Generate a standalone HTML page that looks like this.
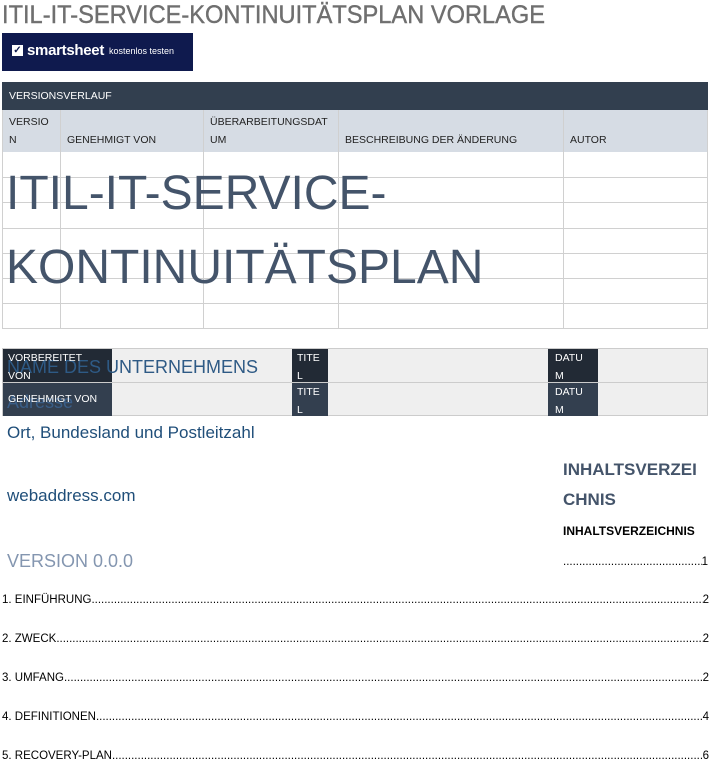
<!DOCTYPE html>
<html><head><meta charset="utf-8"><style>
*{margin:0;padding:0;box-sizing:border-box}
body{width:711px;height:765px;background:#fff;position:relative;overflow:hidden;font-family:"Liberation Sans",sans-serif}
.a{position:absolute;white-space:nowrap}
.c{position:absolute;font-size:10.5px;color:#222;line-height:18px}
.toc{position:absolute;left:2px;width:707px;font-size:11.5px;color:#000;display:flex;white-space:nowrap}
.toc .d{flex:1;overflow:hidden}
</style></head><body>
<div class="a" style="left:2px;top:1px;font-size:25px;color:#6f6f6f;transform:scaleX(0.945);transform-origin:left;-webkit-text-stroke:0.4px #6f6f6f">ITIL-IT-SERVICE-KONTINUITÄTSPLAN VORLAGE</div>
<div class="a" style="left:2px;top:33px;width:191px;height:38px;background:#0f1a4e"></div>
<div class="a" style="left:12px;top:45px;width:11px;height:11px;background:#fff;color:#0f1a4e;font-size:10px;line-height:11px;text-align:center;font-weight:bold">✓</div>
<div class="a" style="left:27px;top:42px;font-size:15px;color:#fff;font-weight:bold;letter-spacing:-0.3px">smartsheet</div>
<div class="a" style="left:109px;top:46px;font-size:9px;color:#fff">kostenlos testen</div>

<div class="a" style="left:2px;top:82px;width:706px;height:28px;background:#323f4f"></div>
<div class="c" style="left:9px;top:87px;color:#fff">VERSIONSVERLAUF</div>
<div class="a" style="left:2px;top:110px;width:706px;height:42px;background:#d6dce4"></div>
<div class="c" style="left:9px;top:113px">VERSIO<br>N</div>
<div class="c" style="left:67px;top:131px">GENEHMIGT VON</div>
<div class="c" style="left:210px;top:113px">ÜBERARBEITUNGSDAT<br>UM</div>
<div class="c" style="left:345px;top:131px">BESCHREIBUNG DER ÄNDERUNG</div>
<div class="c" style="left:570px;top:131px">AUTOR</div>
<svg class="a" style="left:0;top:0" width="711" height="340">
<g stroke="#d0d0d0" stroke-width="1" fill="none">
<line x1="2" y1="177.5" x2="708" y2="177.5"/><line x1="2" y1="202.5" x2="708" y2="202.5"/><line x1="2" y1="228.5" x2="708" y2="228.5"/><line x1="2" y1="253.5" x2="708" y2="253.5"/><line x1="2" y1="278.5" x2="708" y2="278.5"/><line x1="2" y1="303.5" x2="708" y2="303.5"/><line x1="2" y1="328.5" x2="708" y2="328.5"/>
<line x1="2.5" y1="110" x2="2.5" y2="329"/><line x1="60.5" y1="110" x2="60.5" y2="329"/><line x1="203.5" y1="110" x2="203.5" y2="329"/><line x1="338.5" y1="110" x2="338.5" y2="329"/><line x1="563.5" y1="110" x2="563.5" y2="329"/><line x1="707.5" y1="110" x2="707.5" y2="329"/>
</g></svg>
<div class="a" style="left:6px;top:166px;font-size:48px;color:#44546a;line-height:56px">ITIL-IT-SERVICE-</div>
<div class="a" style="left:6px;top:240px;font-size:48px;color:#44546a;line-height:56px">KONTINUITÄTSPLAN</div>

<div class="a" style="left:2px;top:348px;width:706px;height:68px;background:#efefef;border:1px solid #ccc"></div>
<div class="a" style="left:2px;top:382px;width:706px;height:1px;background:#ccc"></div>
<div class="a" style="left:3px;top:349px;width:109px;height:33px;background:#222a35"></div>
<div class="a" style="left:3px;top:383px;width:109px;height:33px;background:#333f4f"></div>
<div class="a" style="left:292px;top:349px;width:36px;height:33px;background:#222a35"></div>
<div class="a" style="left:292px;top:383px;width:36px;height:33px;background:#333f4f"></div>
<div class="a" style="left:548px;top:349px;width:50px;height:33px;background:#222a35"></div>
<div class="a" style="left:548px;top:383px;width:50px;height:33px;background:#333f4f"></div>
<div class="a" style="left:7px;top:357px;font-size:18px;color:#2e5a85">NAME DES UNTERNEHMENS</div>
<div class="a" style="left:7px;top:392px;font-size:18px;color:#3a5e88">Adresse</div>
<div class="c" style="left:8px;top:349px;color:#fff">VORBEREITET<br>VON</div>
<div class="c" style="left:8px;top:390px;color:#fff">GENEHMIGT VON</div>
<div class="c" style="left:297px;top:349px;color:#fff">TITE<br>L</div>
<div class="c" style="left:297px;top:383px;color:#fff">TITE<br>L</div>
<div class="c" style="left:555px;top:349px;color:#fff">DATU<br>M</div>
<div class="c" style="left:555px;top:383px;color:#fff">DATU<br>M</div>

<div class="a" style="left:7px;top:423px;font-size:17px;color:#1f4e79">Ort, Bundesland und Postleitzahl</div>
<div class="a" style="left:7px;top:486px;font-size:17px;color:#1f4e79">webaddress.com</div>
<div class="a" style="left:7px;top:551px;font-size:18px;color:#8496b0">VERSION 0.0.0</div>
<div class="a" style="left:563px;top:455px;font-size:17px;font-weight:bold;color:#44546a;line-height:30px">INHALTSVERZEI<br>CHNIS</div>
<div class="a" style="left:563px;top:524px;font-size:12px;font-weight:bold;color:#000">INHALTSVERZEICHNIS</div>
<div class="a" style="left:563px;top:556px;width:145px;font-size:11.5px;color:#000;display:flex"><span style="flex:1;overflow:hidden">............................................................</span><span>1</span></div>
<div class="toc" style="top:594px"><span>1. EINFÜHRUNG</span><span class="d">....................................................................................................................................................................................................................</span><span>2</span></div>
<div class="toc" style="top:633px"><span>2. ZWECK</span><span class="d">....................................................................................................................................................................................................................</span><span>2</span></div>
<div class="toc" style="top:672px"><span>3. UMFANG</span><span class="d">....................................................................................................................................................................................................................</span><span>2</span></div>
<div class="toc" style="top:711px"><span>4. DEFINITIONEN</span><span class="d">....................................................................................................................................................................................................................</span><span>4</span></div>
<div class="toc" style="top:750px"><span>5. RECOVERY-PLAN</span><span class="d">....................................................................................................................................................................................................................</span><span>6</span></div>
</body></html>
